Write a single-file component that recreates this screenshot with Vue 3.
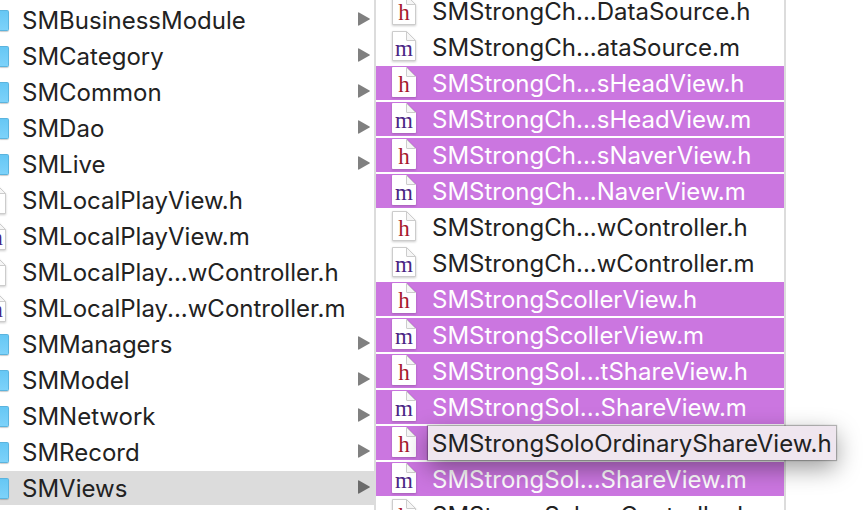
<script setup>
const folders = [
  { name: 'SMBusinessModule', kind: 'folder' },
  { name: 'SMCategory', kind: 'folder' },
  { name: 'SMCommon', kind: 'folder' },
  { name: 'SMDao', kind: 'folder' },
  { name: 'SMLive', kind: 'folder' },
  { name: 'SMLocalPlayView.h', kind: 'h' },
  { name: 'SMLocalPlayView.m', kind: 'm' },
  { name: 'SMLocalPlay...wController.h', kind: 'h' },
  { name: 'SMLocalPlay...wController.m', kind: 'm' },
  { name: 'SMManagers', kind: 'folder' },
  { name: 'SMModel', kind: 'folder' },
  { name: 'SMNetwork', kind: 'folder' },
  { name: 'SMRecord', kind: 'folder' },
  { name: 'SMViews', kind: 'folder', active: true },
  { name: '', kind: 'h' },
]

const files = [
  { name: 'SMStrongCh...DataSource.h', kind: 'h' },
  { name: 'SMStrongCh...ataSource.m', kind: 'm' },
  { name: 'SMStrongCh...sHeadView.h', kind: 'h', selected: true },
  { name: 'SMStrongCh...sHeadView.m', kind: 'm', selected: true },
  { name: 'SMStrongCh...sNaverView.h', kind: 'h', selected: true },
  { name: 'SMStrongCh...NaverView.m', kind: 'm', selected: true },
  { name: 'SMStrongCh...wController.h', kind: 'h' },
  { name: 'SMStrongCh...wController.m', kind: 'm' },
  { name: 'SMStrongScollerView.h', kind: 'h', selected: true },
  { name: 'SMStrongScollerView.m', kind: 'm', selected: true },
  { name: 'SMStrongSol...tShareView.h', kind: 'h', selected: true },
  { name: 'SMStrongSol...ShareView.m', kind: 'm', selected: true },
  { name: '', kind: 'h', selected: true, tip: 'SMStrongSoloOrdinaryShareView.h' },
  { name: 'SMStrongSol...ShareView.m', kind: 'm', selected: true },
  { name: 'SMStrongSol...wController.h', kind: 'h' },
]
</script>

<template>
  <main class="browser">
    <ul class="column parents">
      <li v-for="(item, i) in folders" :key="i" class="row" :class="{ active: item.active }">
        <span v-if="item.kind === 'folder'" class="folder"></span>
        <span v-else class="doc" :class="item.kind">
          <svg viewBox="0 0 24 30" aria-hidden="true">
            <path class="sheet" d="M.5.5h14l9 9v20H.5z" />
            <path class="fold" d="M14.5.5v8.500q0 .5.5.5h8.500z" />
          </svg>
          <span v-if="item.kind === 'm'" class="letter">m</span>
        </span>
        <span class="name">{{ item.name }}</span>
        <svg v-if="item.kind === 'folder'" class="arrow" viewBox="0 0 12 14" aria-hidden="true">
          <path d="M1 0.5Q0 0 0 1v12q0 1 1 .5L11.500 7.600Q12.300 7 11.500 6.400z" />
        </svg>
      </li>
    </ul>
    <ul class="column children">
      <li v-for="(item, i) in files" :key="i" class="row" :class="{ selected: item.selected }">
        <span class="doc" :class="item.kind">
          <svg viewBox="0 0 24 30" aria-hidden="true">
            <path class="sheet" d="M.5.5h14l9 9v20H.5z" />
            <path class="fold" d="M14.5.5v8.500q0 .5.5.5h8.500z" />
          </svg>
          <span class="letter">{{ item.kind }}</span>
        </span>
        <span class="name">{{ item.name }}</span>
        <span v-if="item.tip" class="tip" role="tooltip">{{ item.tip }}</span>
      </li>
    </ul>
  </main>
</template>

<style>
body {
  margin: 0;
  overflow: hidden;
  background: #fff;
}
</style>

<style scoped>
.browser {
  display: grid;
  grid-template-columns: 376px 410px 1fr;
  height: 100vh;
  overflow: hidden;
  font-family: Inter, sans-serif;
  font-size: 24px;
  color: #222;
}
.column {
  display: flex;
  flex-direction: column;
  gap: 2px;
  margin: 0;
  padding: 0;
  list-style: none;
  border-right: 2px solid #dcdcdc;
}
.parents {
  padding-top: 3px;
}
.children {
  margin-top: -6px;
}
.row {
  position: relative;
  display: flex;
  flex: none;
  align-items: center;
  height: 34px;
  line-height: 34px;
  white-space: nowrap;
}
.parents .row {
  padding-right: 4px;
}
.children .row {
  padding-left: 16px;
}
.name {
  flex: 1;
  padding-top: 2px;
}
.active {
  background: #dcdcdc;
}
.selected {
  background: #cb76e0;
  color: #fff;
}
.folder {
  box-sizing: border-box;
  width: 9px;
  height: 21px;
  margin-top: 1px;
  margin-right: 13px;
  background: linear-gradient(#66c7f4, #7dd2fa);
  border: solid #5bb4de;
  border-width: 1px 1px 1px 0;
  border-radius: 0 2px 2px 0;
  box-shadow: 0 1px 1px #0003;
}
.doc {
  position: relative;
  width: 24px;
  height: 30px;
  margin-right: 16px;
  margin-bottom: 2px;
}
.parents .doc {
  margin-left: -18px;
}
.doc svg {
  display: block;
  width: 24px;
  height: 30px;
  overflow: visible;
  filter: drop-shadow(0 1px 1px #0003);
}
.sheet {
  fill: #fff;
  stroke: #ccc;
}
.selected .sheet {
  stroke: #fff;
}
.fold {
  fill: #f6f6f6;
  stroke: #ccc;
}
.letter {
  position: absolute;
  inset: 0;
  font-family: "Liberation Serif", serif;
  font-size: 23px;
  line-height: 36px;
  text-align: center;
}
.h .letter {
  color: #a6192e;
}
.m .letter {
  color: #4a2584;
}
.arrow {
  width: 12px;
  height: 14px;
  margin-bottom: 2px;
  fill: #808080;
}
.active .arrow {
  fill: #6b6b6b;
}
.tip {
  position: absolute;
  z-index: 1;
  top: 0;
  left: 52px;
  padding: 1px 4px 0;
  line-height: 33px;
  background: #efe6ef;
  color: #222;
  box-shadow: 0 0 1px 1px #0004, 0 8px 24px #0006;
}
</style>
